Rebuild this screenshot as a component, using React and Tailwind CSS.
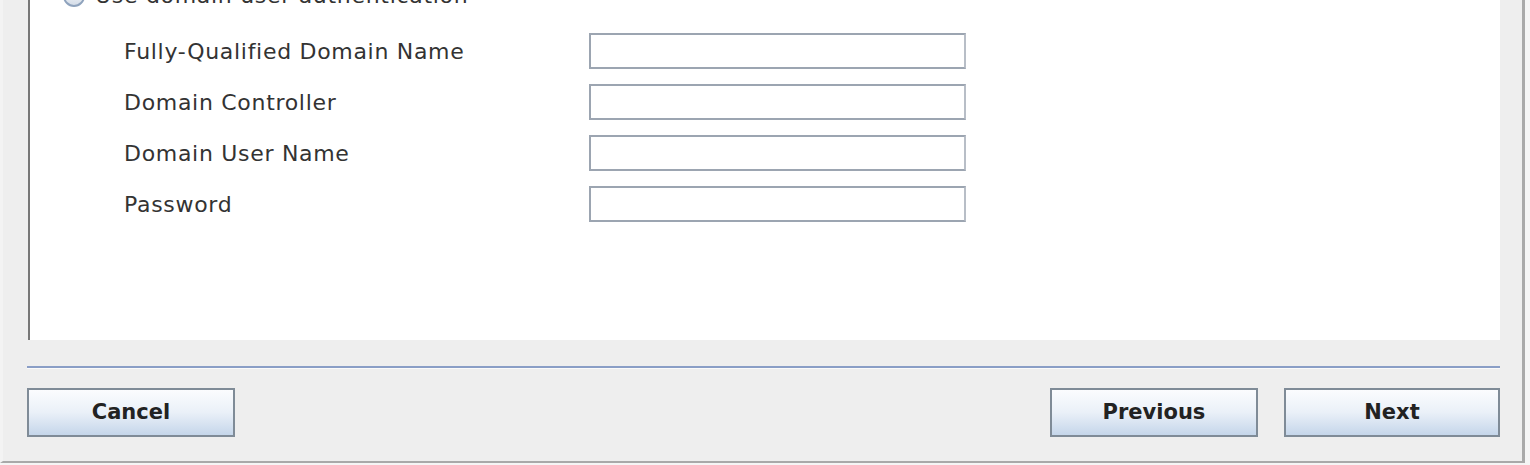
import React from "react";

const fields = [
  "Fully-Qualified Domain Name",
  "Domain Controller",
  "Domain User Name",
  "Password",
];

function WizardButton({ children, className = "" }) {
  return (
    <button
      className={`h-[49px] border-2 border-[#7f8b97] bg-gradient-to-b from-[#fbfcfe] via-[#eaf0f8] to-[#c5d6ea] text-[21px] font-bold text-[#222] ${className}`}
    >
      {children}
    </button>
  );
}

export default function App() {
  return (
    <div
      className="w-[1530px] h-[465px] bg-[#f5f5f5] overflow-hidden"
      style={{ fontFamily: '"DejaVu Sans", Verdana, sans-serif' }}
    >
      <div className="w-[1525px] h-[463px] bg-[#eeeeee] border-l-[3px] border-l-[#f3f3f3] border-r-[3px] border-b-2 border-r-[#a9a9a9] border-b-[#a9a9a9] flex flex-col">
        <div className="ml-[25px] w-[1472px] h-[340px] bg-white border-l-2 border-[#777] overflow-hidden">
          <div className="-mt-[16px] flex items-center h-[24px] pl-[33px]">
            <span className="w-[22px] h-[22px] rounded-full border-2 border-[#8fa3bd] bg-gradient-to-b from-white to-[#d5dde8]" />
            <span className="ml-[10px] text-[22px] leading-[24px] tracking-[0.7px] text-[#333]">
              Use domain user authentication
            </span>
          </div>
          <div className="mt-[25px] grid grid-cols-[465px_377px] gap-y-[15px] pl-[94px]">
            {fields.map((f) => (
              <React.Fragment key={f}>
                <div className="h-[36px] flex items-center text-[22px] tracking-[0.7px] text-[#333]">
                  {f}
                </div>
                <div className="h-[36px] border-2 border-[#9ca5b1] border-r-[#b8bec7] bg-white" />
              </React.Fragment>
            ))}
          </div>
        </div>
        <div className="mt-[26px] ml-[24px] w-[1473px] h-[2px] bg-[#8a9ec6]" />
        <div className="h-[1px] ml-[24px] w-[1473px] bg-white/70" />
        <div className="mt-[19px] ml-[24px] w-[1473px] flex">
          <WizardButton className="w-[208px]">Cancel</WizardButton>
          <div className="flex-1" />
          <WizardButton className="w-[208px]">Previous</WizardButton>
          <WizardButton className="w-[216px] ml-[26px]">Next</WizardButton>
        </div>
      </div>
    </div>
  );
}
